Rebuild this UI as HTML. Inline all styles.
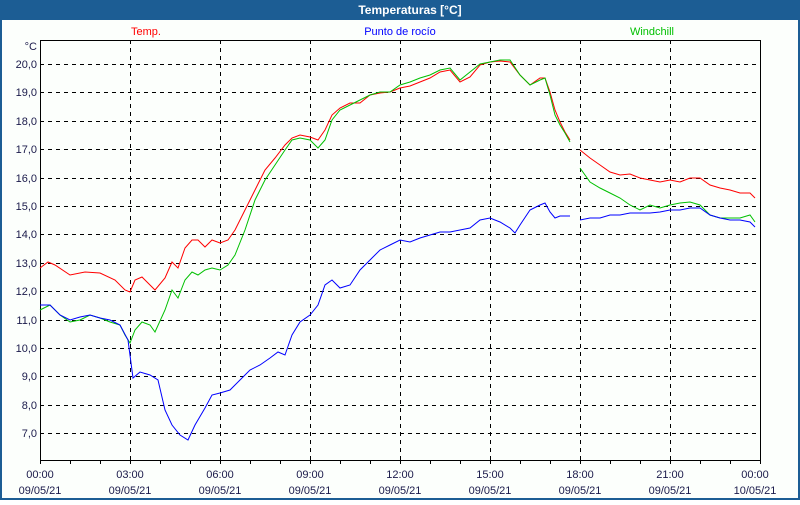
<!DOCTYPE html>
<html><head><meta charset="utf-8"><style>
body{margin:0;width:800px;height:500px;overflow:hidden;background:#fff}
</style></head><body>
<svg width="800" height="500" xmlns="http://www.w3.org/2000/svg" font-family="Liberation Sans, sans-serif" font-size="11">
<rect x="0" y="0" width="800" height="500" fill="#1c5d94"/>
<rect x="2" y="20" width="796" height="478" fill="#fcfffc"/>
<text x="410" y="14" fill="#fff" font-weight="bold" font-size="12" text-anchor="middle">Temperaturas [°C]</text>
<text x="146" y="35" fill="#ff0000" text-anchor="middle">Temp.</text>
<text x="400" y="35" fill="#0000ff" text-anchor="middle">Punto de rocío</text>
<text x="652" y="35" fill="#00c000" text-anchor="middle">Windchill</text>
<g stroke="#000" stroke-dasharray="4,4" stroke-width="1">
<path d="M130.5 40V460M220.5 40V460M310.5 40V460M400.5 40V460M490.5 40V460M580.5 40V460M670.5 40V460"/>
<path d="M40 64.5H760M40 92.5H760M40 121.5H760M40 149.5H760M40 178.5H760M40 206.5H760M40 234.5H760M40 263.5H760M40 291.5H760M40 320.5H760M40 348.5H760M40 376.5H760M40 405.5H760M40 433.5H760"/>
</g>
<rect x="40.5" y="40.5" width="720" height="420" fill="none" stroke="#000"/>
<path stroke="#000" d="M70.5 460v4M100.5 460v4M130.5 460v4M160.5 460v4M190.5 460v4M220.5 460v4M250.5 460v4M280.5 460v4M310.5 460v4M340.5 460v4M370.5 460v4M400.5 460v4M430.5 460v4M460.5 460v4M490.5 460v4M520.5 460v4M550.5 460v4M580.5 460v4M610.5 460v4M640.5 460v4M670.5 460v4M700.5 460v4M730.5 460v4M40.5 460v4M760.5 460v4"/>
<g fill="#1a1a4a" text-anchor="end">
<text x="37" y="50">°C</text>
<text x="37" y="68">20,0</text><text x="37" y="96">19,0</text><text x="37" y="125">18,0</text><text x="37" y="153">17,0</text><text x="37" y="182">16,0</text><text x="37" y="210">15,0</text><text x="37" y="238">14,0</text><text x="37" y="267">13,0</text><text x="37" y="295">12,0</text><text x="37" y="324">11,0</text><text x="37" y="352">10,0</text><text x="37" y="380">9,0</text><text x="37" y="409">8,0</text><text x="37" y="437">7,0</text>
</g>
<g fill="#1a1a4a" text-anchor="middle">
<text x="40" y="478">00:00</text><text x="40" y="494">09/05/21</text>
<text x="130" y="478">03:00</text><text x="130" y="494">09/05/21</text>
<text x="220" y="478">06:00</text><text x="220" y="494">09/05/21</text>
<text x="310" y="478">09:00</text><text x="310" y="494">09/05/21</text>
<text x="400" y="478">12:00</text><text x="400" y="494">09/05/21</text>
<text x="490" y="478">15:00</text><text x="490" y="494">09/05/21</text>
<text x="580" y="478">18:00</text><text x="580" y="494">09/05/21</text>
<text x="670" y="478">21:00</text><text x="670" y="494">09/05/21</text>
<text x="755" y="478">00:00</text><text x="755" y="494">10/05/21</text>
</g>
<g fill="none" stroke-width="1">
<polyline stroke="#ff0000" points="40,268 48,262 55,265 70,275 85,272 100,273 115,280 125,290 130,292 135,280 142,277 150,285 155,290 165,278 172,262 178,268 185,248 192,240 198,240 205,247 212,240 220,243 228,240 235,230 245,210 255,190 265,170 275,158 285,145 292,138 300,135 310,137 318,140 325,130 332,115 340,108 350,103 360,103 370,95 380,93 390,92 400,88 410,86 420,82 430,78 440,72 450,70 460,82 470,77 480,65 490,62 500,61 510,62 520,75 530,85 540,78 545,78 550,92 555,110 560,122 565,132 570,140"/>
<polyline stroke="#ff0000" points="580,150 590,158 600,165 610,172 620,175 630,174 640,178 650,180 660,182 670,180 680,182 690,178 700,178 710,185 720,188 730,190 740,193 750,193 755,198"/>
<polyline stroke="#00c000" points="40,310 50,305 60,315 70,322 80,320 90,315 100,318 110,322 120,325 125,335 130,343 135,330 142,322 150,325 155,332 165,310 172,290 178,298 185,280 192,272 198,275 205,270 212,268 220,270 228,265 235,255 245,230 255,200 265,180 275,165 285,150 292,140 300,138 310,140 318,148 325,140 332,120 340,110 350,105 360,100 370,95 380,92 390,92 400,85 410,82 420,78 430,75 440,70 450,68 460,80 470,72 480,64 490,62 500,60 510,60 520,75 530,85 540,80 545,78 550,95 555,115 560,125 565,133 570,142"/>
<polyline stroke="#00c000" points="580,168 590,182 600,188 610,193 620,198 630,205 640,210 650,205 660,208 670,205 680,203 690,202 700,205 710,215 720,218 730,218 740,218 750,215 755,222"/>
<polyline stroke="#0000ff" points="40,305 50,305 60,315 70,320 80,317 90,315 100,318 110,320 120,325 128,340 133,378 140,372 150,375 158,380 165,410 172,425 180,435 188,440 195,425 205,408 212,395 220,393 230,390 240,380 250,370 260,365 270,358 278,352 285,355 292,335 300,322 310,315 318,305 325,285 332,280 340,288 350,285 360,270 370,260 380,250 390,245 400,240 410,242 420,238 430,235 440,232 450,232 460,230 470,228 480,220 490,218 500,222 510,228 515,233 520,225 530,210 540,205 545,203 550,212 555,218 560,216 570,216"/>
<polyline stroke="#0000ff" points="580,220 590,218 600,218 610,215 620,215 630,213 640,213 650,213 660,212 670,210 680,210 690,208 700,208 710,215 720,218 730,220 740,220 750,222 755,227"/>
</g>
</svg>
</body></html>
